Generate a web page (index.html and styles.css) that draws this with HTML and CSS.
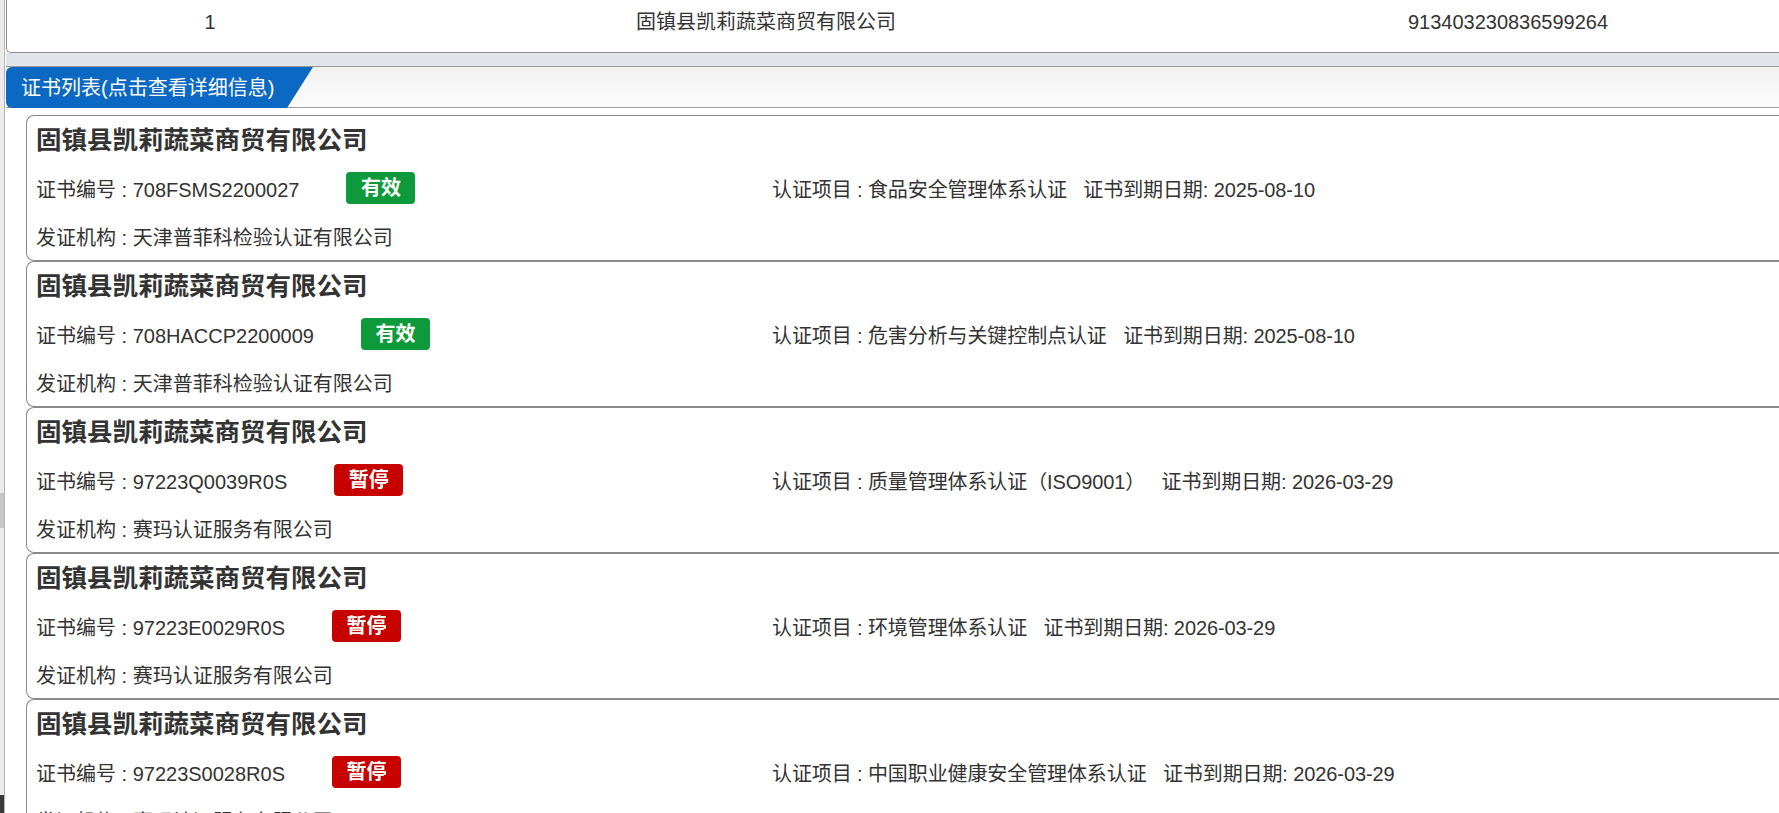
FILE: index.html
```html
<!DOCTYPE html>
<html lang="zh-CN">
<head>
<meta charset="utf-8">
<title>证书列表</title>
<link rel="stylesheet" href="styles.css">
</head>
<body>
<div class="page">
  <div class="edge">
    <div class="edge-gap1"></div>
    <div class="edge-thumb"></div>
    <div class="edge-gap2"></div>
    <div class="edge-dark"></div>
  </div>
  <div class="main">
    <div class="topbox">
      <div class="toprow">
        <div class="cell">1</div>
        <div class="cell">固镇县凯莉蔬菜商贸有限公司</div>
        <div class="cell">913403230836599264</div>
        <div class="cell"></div>
      </div>
    </div>
    <div class="band"></div>
    <div class="header">
      <div class="tab">证书列表(点击查看详细信息)</div>
    </div>
    <div class="list">
      <div class="card">
        <div class="title">固镇县凯莉蔬菜商贸有限公司</div>
        <div class="row">
          <div class="left">证书编号 : 708FSMS2200027<span class="badge ok">有效</span></div>
          <div class="right">认证项目 : 食品安全管理体系认证&nbsp;&nbsp;&nbsp;证书到期日期: 2025-08-10</div>
        </div>
        <div class="row">
          <div class="left">发证机构 : 天津普菲科检验认证有限公司</div>
          <div class="right"></div>
        </div>
      </div>
      <div class="card">
        <div class="title">固镇县凯莉蔬菜商贸有限公司</div>
        <div class="row">
          <div class="left">证书编号 : 708HACCP2200009<span class="badge ok">有效</span></div>
          <div class="right">认证项目 : 危害分析与关键控制点认证&nbsp;&nbsp;&nbsp;证书到期日期: 2025-08-10</div>
        </div>
        <div class="row">
          <div class="left">发证机构 : 天津普菲科检验认证有限公司</div>
          <div class="right"></div>
        </div>
      </div>
      <div class="card">
        <div class="title">固镇县凯莉蔬菜商贸有限公司</div>
        <div class="row">
          <div class="left">证书编号 : 97223Q0039R0S<span class="badge stop">暂停</span></div>
          <div class="right">认证项目 : 质量管理体系认证（ISO9001）&nbsp;&nbsp;&nbsp;证书到期日期: 2026-03-29</div>
        </div>
        <div class="row">
          <div class="left">发证机构 : 赛玛认证服务有限公司</div>
          <div class="right"></div>
        </div>
      </div>
      <div class="card">
        <div class="title">固镇县凯莉蔬菜商贸有限公司</div>
        <div class="row">
          <div class="left">证书编号 : 97223E0029R0S<span class="badge stop">暂停</span></div>
          <div class="right">认证项目 : 环境管理体系认证&nbsp;&nbsp;&nbsp;证书到期日期: 2026-03-29</div>
        </div>
        <div class="row">
          <div class="left">发证机构 : 赛玛认证服务有限公司</div>
          <div class="right"></div>
        </div>
      </div>
      <div class="card">
        <div class="title">固镇县凯莉蔬菜商贸有限公司</div>
        <div class="row">
          <div class="left">证书编号 : 97223S0028R0S<span class="badge stop">暂停</span></div>
          <div class="right">认证项目 : 中国职业健康安全管理体系认证&nbsp;&nbsp;&nbsp;证书到期日期: 2026-03-29</div>
        </div>
        <div class="row">
          <div class="left">发证机构 : 赛玛认证服务有限公司</div>
          <div class="right"></div>
        </div>
      </div>
    </div>
  </div>
</div>
</body>
</html>
```

FILE: styles.css
```css
html, body {
  margin: 0;
  padding: 0;
  overflow: hidden;
  background: #ffffff;
}
body {
  font-family: "Liberation Sans", "Noto Sans CJK SC", sans-serif;
  font-size: 20px;
  color: #333333;
}
.page {
  display: flex;
  width: 2300px;
  height: 813px;
  overflow: hidden;
}
.edge {
  flex: none;
  width: 4px;
  height: 813px;
  background: #ebebeb;
  border-right: 1px solid #b4b4b4;
  display: flex;
  flex-direction: column;
}
.edge-gap1 { height: 493px; }
.edge-thumb { height: 35px; background: #c6c6c6; }
.edge-gap2 { flex: 1; }
.edge-dark { height: 18px; background: #3a3a3a; }
.main {
  flex: none;
  width: 2200px;
  margin-left: 1px;
}
.topbox {
  height: 52px;
  border-left: 1px solid #8e8e8e;
  border-bottom: 1px solid #8e8e8e;
  border-bottom-left-radius: 5px;
  background: #ffffff;
}
.toprow {
  display: grid;
  grid-template-columns: 406px 706px 778px 1fr;
  height: 44px;
  line-height: 44px;
}
.cell {
  text-align: center;
  white-space: nowrap;
}
.band {
  height: 13px;
  background: #e1e5e9;
}
.header {
  height: 40px;
  border-top: 1px solid #999999;
  border-bottom: 1px solid #999999;
  background: linear-gradient(#f1f1f1, #fcfcfc);
  display: flex;
  align-items: flex-start;
}
.tab {
  flex: none;
  width: 307px;
  height: 41px;
  line-height: 43px;
  box-sizing: border-box;
  padding-left: 15px;
  background: #0b69c3;
  color: #ffffff;
  font-size: 20px;
  white-space: nowrap;
  border-radius: 6px 0 0 6px;
  clip-path: polygon(0 0, 100% 0, calc(100% - 26px) 100%, 0 100%);
}
.list {
  padding-top: 7px;
  padding-left: 20px;
}
.card {
  height: 146px;
  box-sizing: border-box;
  border: 1px solid #8a8a8a;
  border-right: none;
  border-radius: 8px 0 0 8px;
  padding-left: 9px;
  background: #ffffff;
}
.title {
  height: 48px;
  line-height: 49px;
  font-size: 25.5px;
  font-weight: bold;
  color: #333333;
  white-space: nowrap;
}
.row {
  display: grid;
  grid-template-columns: 736px 1fr;
  height: 48px;
}
.left, .right {
  display: flex;
  align-items: center;
  white-space: nowrap;
}
.right {
  letter-spacing: -0.1px;
}
.badge {
  display: inline-block;
  width: 69px;
  height: 32px;
  line-height: 32px;
  margin-left: 47px;
  border-radius: 4px;
  text-align: center;
  color: #ffffff;
  font-weight: bold;
  font-size: 20px;
  letter-spacing: 0;
}
.badge.ok { background: #0e9a3b; }
.badge.stop { background: #c70000; }
```
